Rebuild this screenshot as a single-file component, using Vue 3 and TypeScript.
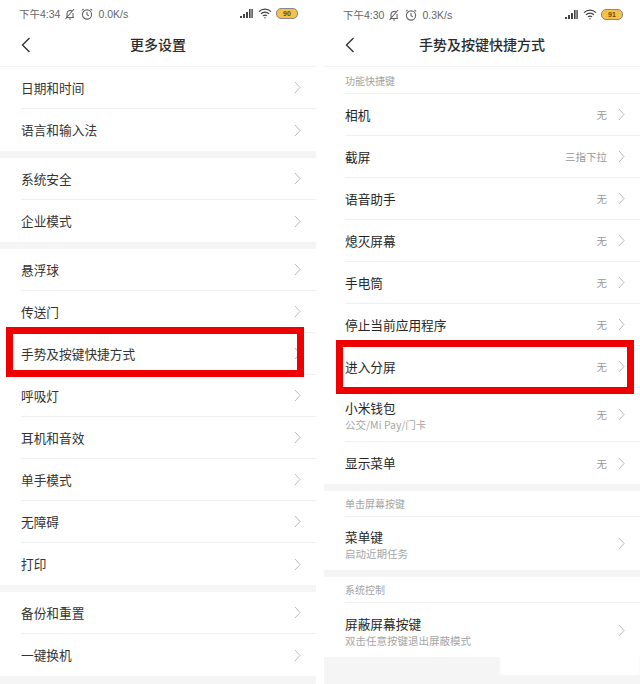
<script setup lang="ts">
interface Row { t: string; sub?: string; v?: string; h?: number }
interface Block { label?: string; rows: Row[] }

const leftBlocks: Block[] = [
  { rows: [{ t: '日期和时间' }, { t: '语言和输入法' }] },
  { rows: [{ t: '系统安全' }, { t: '企业模式' }] },
  { rows: [{ t: '悬浮球' }, { t: '传送门' }, { t: '手势及按键快捷方式' }, { t: '呼吸灯' }, { t: '耳机和音效' }, { t: '单手模式' }, { t: '无障碍' }, { t: '打印' }] },
  { rows: [{ t: '备份和重置' }, { t: '一键换机' }] }
]
const rightBlocks: Block[] = [
  { label: '功能快捷键', rows: [
    { t: '相机', v: '无' }, { t: '截屏', v: '三指下拉' }, { t: '语音助手', v: '无' }, { t: '熄灭屏幕', v: '无' },
    { t: '手电筒', v: '无' }, { t: '停止当前应用程序', v: '无' }, { t: '进入分屏', v: '无' },
    { t: '小米钱包', sub: '公交/Mi Pay/门卡', v: '无', h: 54 }, { t: '显示菜单', v: '无' }
  ] },
  { label: '单击屏幕按键', rows: [{ t: '菜单键', sub: '启动近期任务', h: 53 }] },
  { label: '系统控制', rows: [{ t: '屏蔽屏幕按键', sub: '双击任意按键退出屏蔽模式', h: 54 }] }
]
const phones = [
  { time: '下午4:34', speed: '0.0K/s', batt: '90', title: '更多设置', blocks: leftBlocks, cls: 'left' },
  { time: '下午4:30', speed: '0.3K/s', batt: '91', title: '手势及按键快捷方式', blocks: rightBlocks, cls: 'right' }
]
</script>

<template>
  <div class="page">
    <section v-for="p in phones" :key="p.title" class="phone" :class="p.cls">
      <div class="status">
        <span class="time">{{ p.time }}</span>
        <svg width="14" height="14" viewBox="0 0 14 14" fill="none" stroke="#666" stroke-width="1.1">
          <path d="M3 10.5h8M4 10.5V6.5a3 3 0 0 1 5-2.3M10 6v4.5M6 12h2M2.5 12 11 2" />
        </svg>
        <svg width="14" height="14" viewBox="0 0 14 14" fill="none" stroke="#666" stroke-width="1.1">
          <circle cx="7" cy="7.5" r="4.6" />
          <path d="M7 5v2.8l1.8 1M1.8 3.4 3.6 1.8M12.2 3.4l-1.8-1.6" />
        </svg>
        <span class="speed">{{ p.speed }}</span>
        <span class="grow"></span>
        <svg class="signal" width="13" height="9" viewBox="0 0 13 9" fill="#444">
          <rect x="0" y="7" width="2" height="2" /><rect x="3" y="5" width="2" height="4" />
          <rect x="6" y="3" width="2" height="6" /><rect x="9" y="0" width="1.6" height="9" /><rect x="11.4" y="0" width="1.4" height="9" />
        </svg>
        <svg width="14" height="11" viewBox="0 0 14 11" fill="none" stroke="#444" stroke-width="1.2">
          <path d="M1 3.6a8.6 8.6 0 0 1 12 0M3 5.8a5.6 5.6 0 0 1 8 0M5 7.9a2.8 2.8 0 0 1 4 0" />
          <circle cx="7" cy="9.8" r=".7" fill="#444" stroke="none" />
        </svg>
        <span class="batt">{{ p.batt }}</span>
      </div>
      <header class="nav">
        <svg class="back" width="10" height="16" viewBox="0 0 10 16" fill="none" stroke="#333" stroke-width="1.4">
          <path d="M8.5 1 1.5 8l7 7" />
        </svg>
        <h1>{{ p.title }}</h1>
      </header>
      <div class="hairband"></div>
      <div class="body">
        <div v-for="(b, bi) in p.blocks" :key="bi" class="block">
          <div v-if="b.label" class="label">{{ b.label }}</div>
          <div
            v-for="r in b.rows"
            :key="r.t"
            class="row"
            :style="r.h ? { height: r.h + 'px' } : undefined"
          >
            <div class="texts" :class="{ two: r.sub }">
              <div class="name">{{ r.t }}</div>
              <div v-if="r.sub" class="sub">{{ r.sub }}</div>
            </div>
            <span v-if="r.v" class="val">{{ r.v }}</span>
            <svg class="chev" width="7" height="13" viewBox="0 0 7 13" fill="none" stroke="#b9b9b9" stroke-width="1">
              <path d="m1 1 5 5.5L1 12" />
            </svg>
          </div>
        </div>
      </div>
      <div class="mark"></div>
      <div v-if="p.cls === 'right'" class="smudge"></div>
    </section>
  </div>
</template>

<style>
html, body { margin: 0; background: #fff; }
</style>

<style scoped>
.page {
  width: 640px;
  height: 684px;
  display: flex;
  justify-content: space-between;
  overflow: hidden;
  font-family: "Noto Sans CJK SC", "Liberation Sans", sans-serif;
  background: #fff;
}
.phone {
  position: relative;
  width: 316px;
  height: 684px;
  display: flex;
  flex-direction: column;
  overflow: hidden;
}
.status {
  height: 27px;
  box-sizing: border-box;
  padding: 0 18px 0 19px;
  display: flex;
  align-items: center;
  gap: 3px;
  font-family: "Liberation Sans", "Noto Sans CJK SC", sans-serif;
  font-size: 10.5px;
  color: #666;
}
.right .status { padding: 2px 17px 0 19px; }
.speed { margin-left: 1px; }
.grow { flex: 1; }
.signal { margin-right: 2px; }
.batt {
  width: 20px;
  height: 9px;
  margin-left: 1px;
  border: 1px solid #888;
  border-radius: 5px;
  background: #f6c04a;
  color: #6b4a00;
  font-size: 7px;
  font-weight: 700;
  line-height: 9px;
  text-align: center;
  box-sizing: content-box;
}
.nav {
  position: relative;
  height: 39px;
  display: flex;
  align-items: center;
  justify-content: center;
}
.nav h1 {
  margin: 0 0 5px;
  font-size: 14px;
  font-weight: 500;
  color: #2b2b2b;
}
.back { position: absolute; left: 21px; top: 10px; }
.hairband { height: 1px; background: #f3f3f3; }
.right .hairband { margin-bottom: 1px; }
.body {
  flex: 1;
  display: flex;
  flex-direction: column;
  gap: 7px;
  background: #f5f5f5;
}
.block { background: #fff; }
.label {
  height: 26px;
  margin-left: 21px;
  display: flex;
  align-items: center;
  border-bottom: 1px solid #f0f0f0;
  box-sizing: border-box;
  font-size: 10px;
  color: #a3a3a3;
}
.row {
  height: 42px;
  box-sizing: border-box;
  margin-left: 21px;
  padding-right: 15px;
  display: flex;
  align-items: center;
  border-bottom: 1px solid #f0f0f0;
}
.row:last-child { border-bottom: none; }
.texts { flex: 1; min-width: 0; }
.texts.two { padding-top: 2px; }
.name { font-size: 12.7px; line-height: 18px; color: #333; }
.right .name { color: #262626; }
.sub { font-size: 10.5px; line-height: 15px; color: #a6a6a6; }
.val { font-size: 10.5px; color: #999; margin-right: 11px; }
.chev { flex: none; }
.mark {
  position: absolute;
  box-sizing: border-box;
  border: 7px solid #ee0000;
  background: transparent;
}
.left .mark { left: 6px; top: 327px; width: 298px; height: 50px; }
.right .mark { left: 12px; top: 340px; width: 298px; height: 54px; }
.smudge {
  position: absolute;
  left: 176px;
  top: 651px;
  width: 140px;
  height: 24px;
  background: #fff;
  filter: blur(1px);
}
</style>
